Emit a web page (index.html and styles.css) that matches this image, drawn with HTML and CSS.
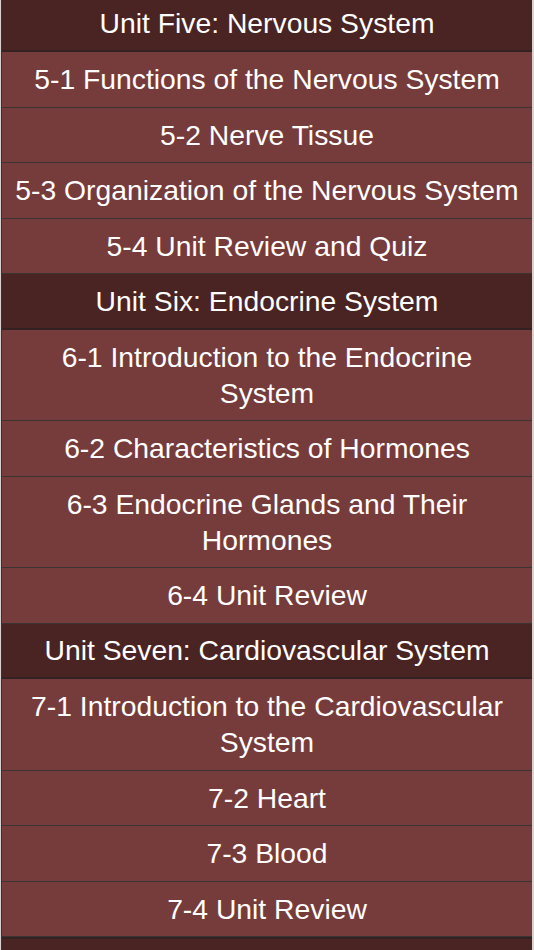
FILE: index.html
```html
<!DOCTYPE html>
<html>
<head>
<meta charset="utf-8">
<link rel="stylesheet" href="styles.css">
</head>
<body>
<div class="list">
  <div class="row unit first">Unit Five: Nervous System</div>
  <div class="row">5-1 Functions of the Nervous System</div>
  <div class="row">5-2 Nerve Tissue</div>
  <div class="row">5-3 Organization of the Nervous System</div>
  <div class="row">5-4 Unit Review and Quiz</div>
  <div class="row unit">Unit Six: Endocrine System</div>
  <div class="row">6-1 Introduction to the Endocrine System</div>
  <div class="row">6-2 Characteristics of Hormones</div>
  <div class="row">6-3 Endocrine Glands and Their Hormones</div>
  <div class="row">6-4 Unit Review</div>
  <div class="row unit">Unit Seven: Cardiovascular System</div>
  <div class="row">7-1 Introduction to the Cardiovascular System</div>
  <div class="row">7-2 Heart</div>
  <div class="row">7-3 Blood</div>
  <div class="row">7-4 Unit Review</div>
  <div class="row unit tail"></div>
</div>
</body>
</html>
```
FILE: styles.css
```css
html, body {
  margin: 0;
  padding: 0;
  height: 950px;
  overflow: hidden;
}
body {
  background: #d9d0d0;
  font-family: "Liberation Sans", Arial, sans-serif;
}
.list {
  display: flex;
  flex-direction: column;
  margin-left: 1px;
  margin-right: 2px;
  border-left: 1px solid #3a3030;
}
.row {
  background: #763b3b;
  color: #ffffff;
  font-size: 28.3px;
  line-height: 36px;
  text-align: center;
  padding: 9.25px 12px;
  border-bottom: 1px solid #3b3434;
}
.unit {
  background: #4a2323;
  padding-top: 8.75px;
  padding-bottom: 8.75px;
  border-top: 0;
  border-bottom: 2px solid #342222;
}
.first {
  padding-top: 5.25px;
}
.tail {
  height: 36px;
  box-shadow: inset 0 2px 0 #342222;
}
```
